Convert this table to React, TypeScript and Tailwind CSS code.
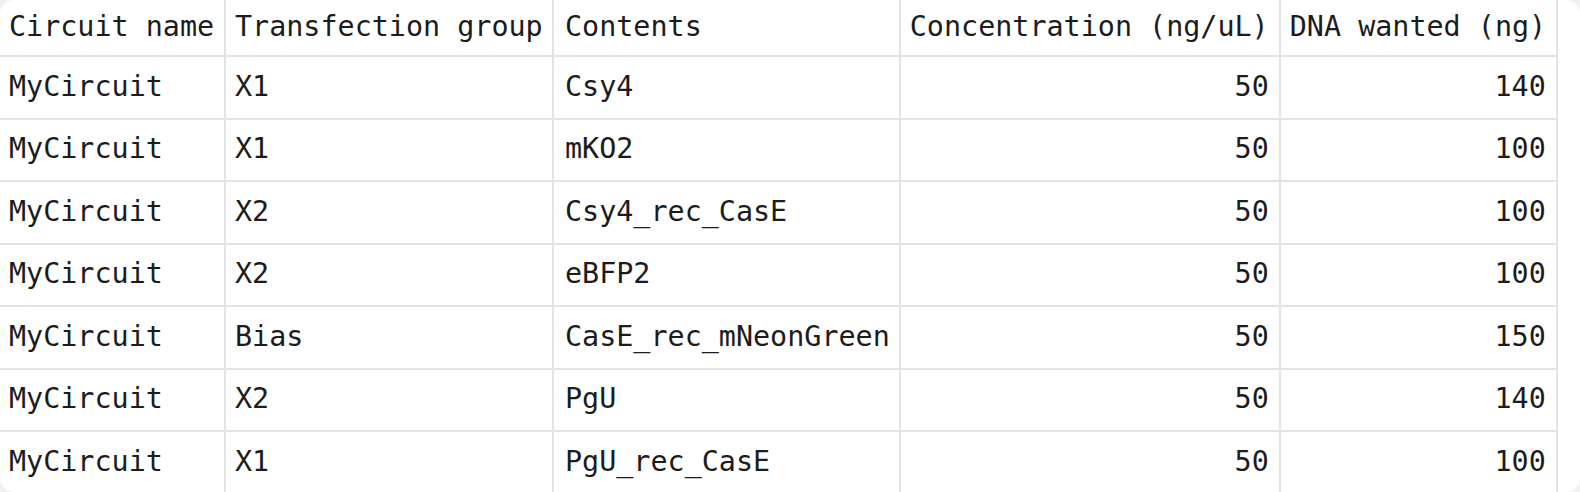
import React from "react";

const headers = ["Circuit name", "Transfection group", "Contents", "Concentration (ng/uL)", "DNA wanted (ng)"];
const widths = ["w-[226px]", "w-[328px]", "w-[346px]", "w-[380px]", "w-[277px]"];

const rows = [
  ["MyCircuit", "X1", "Csy4", 50, 140],
  ["MyCircuit", "X1", "mKO2", 50, 100],
  ["MyCircuit", "X2", "Csy4_rec_CasE", 50, 100],
  ["MyCircuit", "X2", "eBFP2", 50, 100],
  ["MyCircuit", "Bias", "CasE_rec_mNeonGreen", 50, 150],
  ["MyCircuit", "X2", "PgU", 50, 140],
  ["MyCircuit", "X1", "PgU_rec_CasE", 50, 100],
];

const cell = "border-r-2 border-b-2 border-[#e3e3e3] px-[9px] align-middle whitespace-nowrap";

export default function App() {
  return (
    <div className="w-[1580px] h-[492px] bg-[#f1f1f1] overflow-hidden">
      <div className="w-full h-full bg-white rounded-[14px] overflow-hidden">
        <table
          className="table-fixed border-separate border-spacing-0 text-[28.4px] text-[#1c1c1c]"
          style={{ fontFamily: '"DejaVu Sans Mono", "Liberation Mono", monospace' }}
        >
          <thead>
            <tr>
              {headers.map((h, i) => (
                <th key={h} className={`${cell} ${widths[i]} h-[57px] text-left font-normal ${i === 2 ? "pl-[11px]" : ""}`}>
                  {h}
                </th>
              ))}
            </tr>
          </thead>
          <tbody>
            {rows.map((r, ri) => (
              <tr key={ri}>
                <td className={`${cell} h-[62.5px]`}>{r[0]}</td>
                <td className={`${cell} h-[62.5px]`}>{r[1]}</td>
                <td className={`${cell} h-[62.5px] pl-[11px]`}>{r[2]}</td>
                <td className={`${cell} h-[62.5px] text-right pr-[10px]`}>{r[3]}</td>
                <td className={`${cell} h-[62.5px] text-right pr-[10px]`}>{r[4]}</td>
              </tr>
            ))}
          </tbody>
        </table>
      </div>
    </div>
  );
}
